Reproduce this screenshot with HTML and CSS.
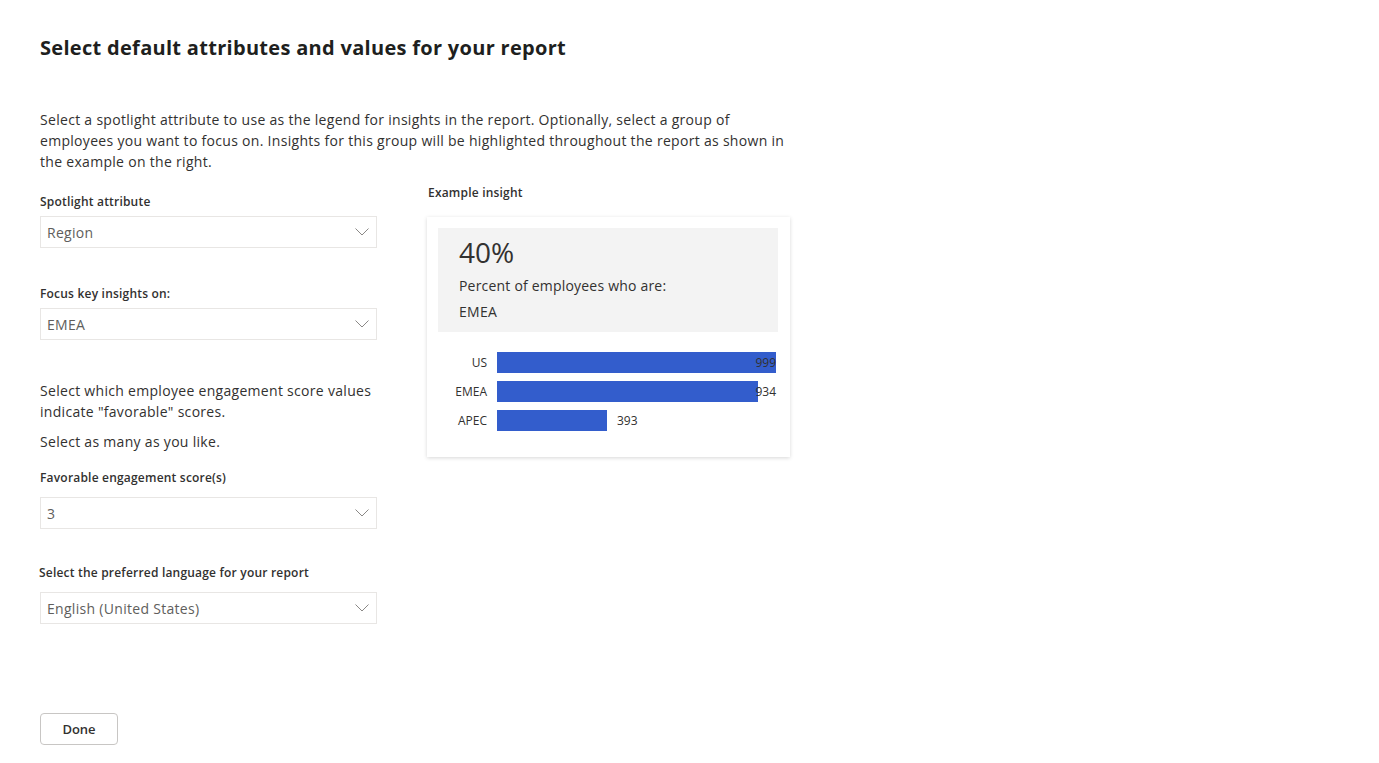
FILE: index.html
```html
<!DOCTYPE html>
<html lang="en">
<head>
<meta charset="utf-8">
<title>Select default attributes</title>
<link rel="stylesheet" href="styles.css">
</head>
<body>
<main class="page">
  <h1 class="title">Select default attributes and values for your report</h1>
  <p class="intro">Select a spotlight attribute to use as the legend for insights in the report. Optionally, select a group of employees you want to focus on. Insights for this group will be highlighted throughout the report as shown in the example on the right.</p>

  <div class="columns">
    <section class="form">
      <label class="label">Spotlight attribute</label>
      <div class="dropdown"><span class="value">Region</span><svg class="chev" width="14" height="8" viewBox="0 0 14 8"><path d="M0.5 0.5 L7 7 L13.5 0.5" fill="none" stroke="#8a8886" stroke-width="1"/></svg></div>

      <label class="label gap-a">Focus key insights on:</label>
      <div class="dropdown"><span class="value">EMEA</span><svg class="chev" width="14" height="8" viewBox="0 0 14 8"><path d="M0.5 0.5 L7 7 L13.5 0.5" fill="none" stroke="#8a8886" stroke-width="1"/></svg></div>

      <p class="text gap-b">Select which employee engagement score values indicate "favorable" scores.</p>
      <p class="text gap-c">Select as many as you like.</p>

      <label class="label gap-d">Favorable engagement score(s)</label>
      <div class="dropdown wide-gap"><span class="value">3</span><svg class="chev" width="14" height="8" viewBox="0 0 14 8"><path d="M0.5 0.5 L7 7 L13.5 0.5" fill="none" stroke="#8a8886" stroke-width="1"/></svg></div>

      <label class="label gap-e shift">Select the preferred language for your report</label>
      <div class="dropdown wide-gap"><span class="value">English (United States)</span><svg class="chev" width="14" height="8" viewBox="0 0 14 8"><path d="M0.5 0.5 L7 7 L13.5 0.5" fill="none" stroke="#8a8886" stroke-width="1"/></svg></div>

      <button class="done" type="button">Done</button>
    </section>

    <section class="example">
      <div class="label">Example insight</div>
      <div class="card">
        <div class="summary">
          <div class="big">40%</div>
          <div class="desc">Percent of employees who are:</div>
          <div class="group">EMEA</div>
        </div>
        <div class="chart">
          <div class="row">
            <span class="cat">US</span>
            <div class="track"><div class="bar" style="width:279px"></div><span class="num end">999</span></div>
          </div>
          <div class="row">
            <span class="cat">EMEA</span>
            <div class="track"><div class="bar" style="width:261px"></div><span class="num end">934</span></div>
          </div>
          <div class="row">
            <span class="cat">APEC</span>
            <div class="track"><div class="bar" style="width:110px"></div><span class="num">393</span></div>
          </div>
        </div>
      </div>
    </section>
  </div>
</main>
</body>
</html>
```
FILE: styles.css
```css
* { box-sizing: border-box; }
html, body { margin: 0; background: #ffffff; }
body {
  font-family: "Open Sans", "Noto Sans", sans-serif;
  color: #323130;
}
.page {
  padding: 34px 0 0 40px;
}
.title {
  margin: 0;
  font-size: 20px;
  line-height: 28px;
  font-weight: 700;
  letter-spacing: 0.3px;
  color: #201f1e;
}
.intro {
  margin: 47px 0 0 0;
  width: 752px;
  font-size: 14px;
  line-height: 21px;
  letter-spacing: 0.3px;
}
.columns {
  display: flex;
  gap: 50px;
  margin-top: 13px;
  align-items: flex-start;
}
.form {
  width: 337px;
  padding-top: 9px;
  display: flex;
  flex-direction: column;
  align-items: flex-start;
}
.label {
  display: block;
  font-size: 12px;
  line-height: 16px;
  font-weight: 600;
  letter-spacing: 0.2px;
  color: #323130;
}
.label.shift { margin-left: -1px; }
.dropdown {
  width: 337px;
  height: 32px;
  margin-top: 6px;
  border: 1px solid #e8e6e4;
  display: flex;
  align-items: center;
  justify-content: space-between;
  padding: 0 7px 0 6px;
}
.dropdown.wide-gap { margin-top: 11px; }
.value {
  font-size: 14px;
  letter-spacing: 0.3px;
  color: #605e5c;
}
.chev { display: block; margin-top: -1px; }
.gap-a { margin-top: 38px; }
.gap-b { margin-top: 40px; }
.gap-c { margin-top: 9px; }
.gap-d { margin-top: 18px; }
.gap-e { margin-top: 36px; }
.text {
  margin-bottom: 0;
  font-size: 14px;
  line-height: 21px;
  letter-spacing: 0.3px;
}
.done {
  margin-top: 89px;
  width: 78px;
  height: 32px;
  border: 1px solid #c8c6c4;
  border-radius: 4px;
  background: #ffffff;
  font-family: inherit;
  font-size: 13px;
  font-weight: 600;
  color: #323130;
  padding: 0;
}
.example {
  width: 363px;
  margin-left: 1px;
}
.card {
  margin-top: 16px;
  margin-left: -1px;
  width: 363px;
  padding: 11px 12px 26px 11px;
  background: #ffffff;
  box-shadow: 0 1px 4px rgba(0, 0, 0, 0.16);
}
.summary {
  background: #f3f3f3;
  padding: 6px 21px 10px 21px;
}
.big {
  font-size: 28px;
  line-height: 36px;
  font-weight: 400;
  color: #323130;
}
.desc {
  margin-top: 6px;
  font-size: 14px;
  line-height: 20px;
  letter-spacing: 0.2px;
}
.group {
  margin-top: 6px;
  font-size: 14px;
  line-height: 20px;
  font-weight: 500;
  letter-spacing: 0.3px;
}
.chart {
  margin-top: 20px;
  display: flex;
  flex-direction: column;
  gap: 8px;
}
.row {
  display: flex;
  align-items: center;
  gap: 10px;
  height: 21px;
}
.cat {
  width: 49px;
  text-align: right;
  font-size: 12px;
  color: #323130;
}
.track {
  position: relative;
  width: 279px;
  height: 21px;
  display: flex;
  align-items: center;
}
.bar {
  height: 21px;
  background: #335dcc;
}
.num {
  margin-left: 10px;
  font-size: 12px;
  color: #323130;
}
.num.end {
  position: absolute;
  right: 0;
  margin-left: 0;
}
```
